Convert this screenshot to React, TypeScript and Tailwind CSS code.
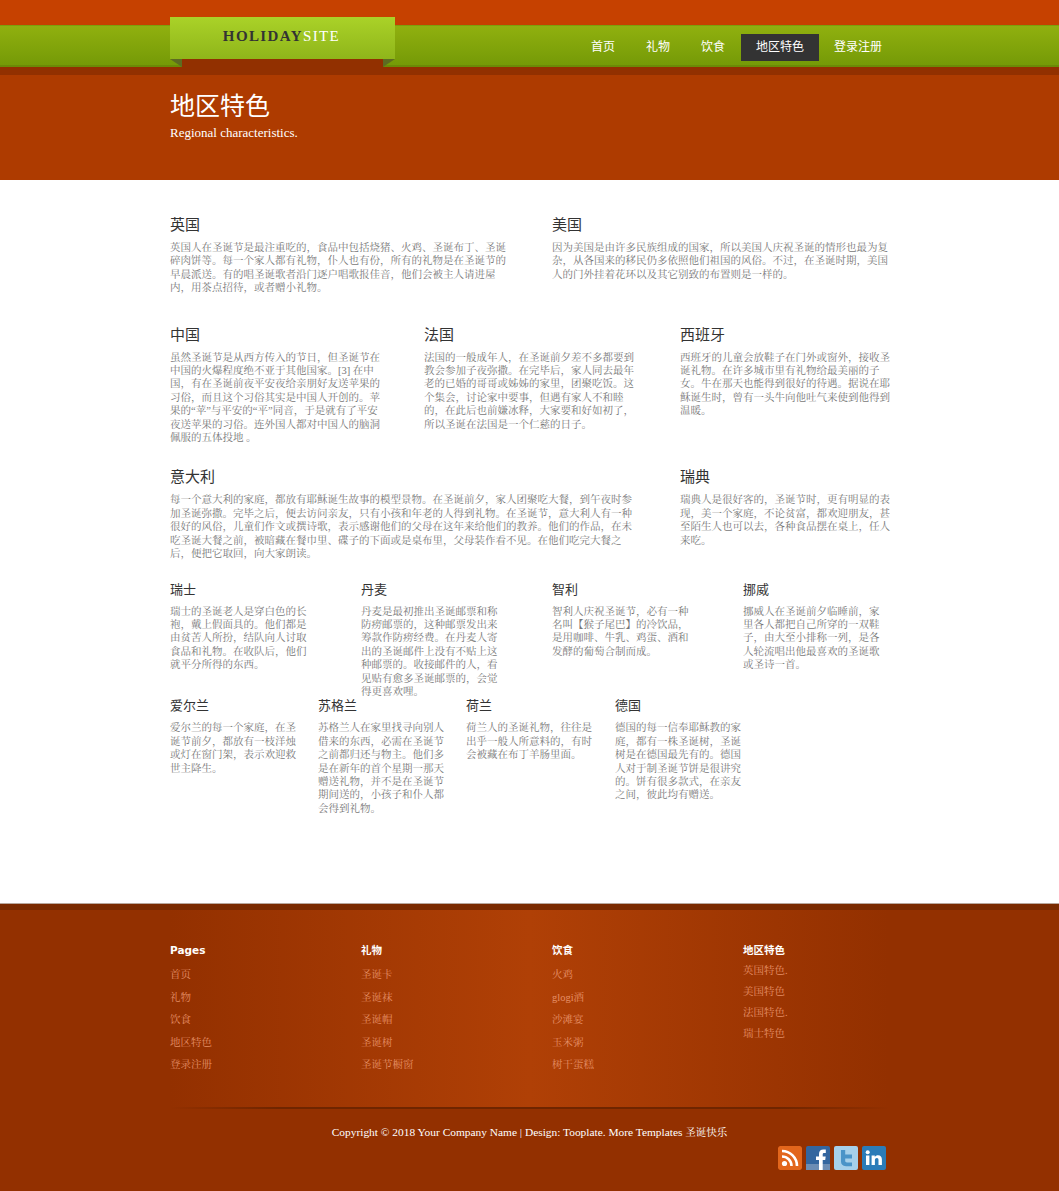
import React from "react";

const serif = "font-['Georgia','Liberation_Serif','Noto_Serif_CJK_SC','AR_PL_UMing_CN',serif]";
const sans = "font-['Liberation_Sans','Noto_Sans_CJK_SC',sans-serif]";

function Card({ title, text, small }: { title: string; text: string; small?: boolean }) {
  return (
    <div>
      <h3 className={`${sans} text-[#333] font-normal ${small ? "text-[13px] leading-[18px] mb-[6px]" : "text-[15px] leading-[20px] mb-[6px]"}`}>{title}</h3>
      <p className={`${serif} text-[10.5px] leading-[13.4px] text-[#777] whitespace-pre`}>{text}</p>
    </div>
  );
}

function FooterCol({ title, links, tight }: { title: string; links: string[]; tight?: boolean }) {
  return (
    <div>
      <h4 className="font-['DejaVu_Sans','Noto_Sans_CJK_SC',sans-serif] font-bold text-[10.5px] leading-[14px] text-white">{title}</h4>
      <ul className={tight ? "mt-[3px]" : "mt-[7px]"}>
        {links.map((l) => (
          <li key={l} className={`${serif} text-[10.5px] text-[#e58f66] ${tight ? "leading-[21px]" : "leading-[22.5px]"}`}>{l}</li>
        ))}
      </ul>
    </div>
  );
}

function Social() {
  return (
    <div className="flex justify-end gap-[4px] pr-[3px] mt-[5px]">
      <svg width="24" height="24" viewBox="0 0 24 24" className="rounded-[2px]">
        <rect width="24" height="24" rx="2" fill="#e2661c" />
        <circle cx="6.5" cy="17.5" r="2.6" fill="#fff" />
        <path d="M4 10.5a9.5 9.5 0 0 1 9.5 9.5" stroke="#fff" strokeWidth="2.6" fill="none" />
        <path d="M4 5a15 15 0 0 1 15 15" stroke="#fff" strokeWidth="2.6" fill="none" />
      </svg>
      <svg width="24" height="24" viewBox="0 0 24 24">
        <rect width="24" height="24" rx="2" fill="#33669f" />
        <rect y="18" width="24" height="6" fill="#6c8db4" />
        <path d="M13 24V14h-3v-3.6h3V8c0-3 1.8-4.4 4.4-4.4h2.4v3.4h-1.6c-1.2 0-1.5.6-1.5 1.5v1.9h3l-.5 3.6h-2.5v10z" fill="#fff" />
      </svg>
      <svg width="24" height="24" viewBox="0 0 24 24">
        <rect width="24" height="24" rx="2" fill="#a6d0ea" />
        <path d="M7 4h4.2v4.6H18v3.8h-6.8v2.4c0 1.2.6 1.6 1.8 1.6H18v3.8h-6c-3.4 0-5-1.8-5-4.6z" fill="#4a94c8" />
      </svg>
      <svg width="24" height="24" viewBox="0 0 24 24">
        <rect width="24" height="24" rx="2" fill="#2b7cb8" />
        <rect x="4" y="9.5" width="3.4" height="9.5" fill="#fff" />
        <circle cx="5.7" cy="6.3" r="2" fill="#fff" />
        <path d="M9.6 9.5h3.2v1.4c.7-1 1.8-1.7 3.2-1.7 2.6 0 3.9 1.7 3.9 4.4V19h-3.4v-5c0-1.3-.5-2.1-1.6-2.1s-2 .8-2 2.2V19H9.6z" fill="#fff" />
      </svg>
    </div>
  );
}

export default function App() {
  const nav = ["首页", "礼物", "饮食", "地区特色", "登录注册"];
  return (
    <div className="bg-white min-h-[1191px]">
      <header className="relative">
        <div className="h-[25px] bg-[#c64100]" />
        <div className="h-[42px] border-t border-[#7d9f0c] border-b-2 border-b-[#6b8a06] bg-[linear-gradient(#90b00f,#759a07)]">
          <nav className={`w-[719px] mx-auto flex justify-end gap-[1px] pt-[8px] translate-x-[8px] ${sans}`}>
            {nav.map((n) => (
              <a key={n} className={`h-[27px] px-[15px] text-[12px] leading-[27px] text-white ${n === "地区特色" ? "bg-[#333]" : ""} ${n === "登录注册" ? "-ml-[1px]" : ""}`}>{n}</a>
            ))}
          </nav>
        </div>
        <div className="h-[8px] bg-[#923000]" />
        <div className="h-[105px] bg-[#ae3b00]">
          <div className="w-[719px] mx-auto pt-[14px]">
            <h1 className={`${sans} text-[25px] leading-[34px] text-white font-normal`}>地区特色</h1>
            <p className="font-['Georgia','Liberation_Serif',serif] text-[13px] leading-[16px] mt-[2px] text-white">Regional characteristics.</p>
          </div>
        </div>
        <div className="absolute top-[17px] left-[170px] w-[225px] h-[50px]">
          <div className="h-[42px] bg-[linear-gradient(#aad228,#8fb51a)] flex items-center justify-center pr-[2px] pb-[4px] font-['Liberation_Serif',serif] text-[15px] tracking-[1.4px]">
            <span className="font-bold text-[#333]">HOLIDAY</span>
            <span className="text-white">SITE</span>
          </div>
          <svg width="225" height="8" viewBox="0 0 225 8" className="block">
            <path d="M0 0h12v8z" fill="#5d6b22" />
            <path d="M225 0h-12v8z" fill="#5d6b22" />
            <path d="M12 0h201v8H12z" fill="#923000" />
          </svg>
        </div>
      </header>

      <main className="w-[719px] mx-auto pt-[35px] h-[723px]">
        <div className="grid grid-cols-[382px_1fr]">
          <Card title="英国" text={"英国人在圣诞节是最注重吃的，食品中包括烧猪、火鸡、圣诞布丁、圣诞\n碎肉饼等。每一个家人都有礼物，仆人也有份，所有的礼物是在圣诞节的\n早晨派送。有的唱圣诞歌者沿门逐户唱歌报佳音，他们会被主人请进屋\n内，用茶点招待，或者赠小礼物。"} />
          <Card title="美国" text={"因为美国是由许多民族组成的国家，所以美国人庆祝圣诞的情形也最为复\n杂，从各国来的移民仍多依照他们祖国的风俗。不过，在圣诞时期，美国\n人的门外挂着花环以及其它别致的布置则是一样的。"} />
        </div>
        <div className="grid grid-cols-[254px_256px_1fr] mt-[30px]">
          <Card title="中国" text={"虽然圣诞节是从西方传入的节日，但圣诞节在\n中国的火爆程度绝不亚于其他国家。[3] 在中\n国，有在圣诞前夜平安夜给亲朋好友送苹果的\n习俗，而且这个习俗其实是中国人开创的。苹\n果的“苹”与平安的“平”同音，于是就有了平安\n夜送苹果的习俗。连外国人都对中国人的脑洞\n佩服的五体投地 。"} />
          <Card title="法国" text={"法国的一般成年人，在圣诞前夕差不多都要到\n教会参加子夜弥撒。在完毕后，家人同去最年\n老的已婚的哥哥或姊姊的家里，团聚吃饭。这\n个集会，讨论家中要事，但遇有家人不和睦\n的，在此后也前嫌冰释，大家要和好如初了，\n所以圣诞在法国是一个仁慈的日子。"} />
          <Card title="西班牙" text={"西班牙的儿童会放鞋子在门外或窗外，接收圣\n诞礼物。在许多城市里有礼物给最美丽的子\n女。牛在那天也能得到很好的待遇。据说在耶\n稣诞生时，曾有一头牛向他吐气来使到他得到\n温暖。"} />
        </div>
        <div className="grid grid-cols-[510px_1fr] mt-[23px]">
          <Card title="意大利" text={"每一个意大利的家庭，都放有耶稣诞生故事的模型景物。在圣诞前夕，家人团聚吃大餐，到午夜时参\n加圣诞弥撒。完毕之后，便去访问亲友，只有小孩和年老的人得到礼物。在圣诞节，意大利人有一种\n很好的风俗，儿童们作文或撰诗歌，表示感谢他们的父母在这年来给他们的教养。他们的作品，在未\n吃圣诞大餐之前，被暗藏在餐巾里、碟子的下面或是桌布里，父母装作看不见。在他们吃完大餐之\n后，便把它取回，向大家朗读。"} />
          <Card title="瑞典" text={"瑞典人是很好客的，圣诞节时，更有明显的表\n现，美一个家庭，不论贫富，都欢迎朋友，甚\n至陌生人也可以去，各种食品摆在桌上，任人\n来吃。"} />
        </div>
        <div className="grid grid-cols-[191px_191px_191px_1fr] mt-[20px]">
          <Card small title="瑞士" text={"瑞士的圣诞老人是穿白色的长\n袍，戴上假面具的。他们都是\n由贫苦人所扮，结队向人讨取\n食品和礼物。在收队后，他们\n就平分所得的东西。"} />
          <Card small title="丹麦" text={"丹麦是最初推出圣诞邮票和称\n防痨邮票的，这种邮票发出来\n筹款作防痨经费。在丹麦人寄\n出的圣诞邮件上没有不贴上这\n种邮票的。收接邮件的人，看\n见贴有愈多圣诞邮票的，会觉\n得更喜欢哩。"} />
          <Card small title="智利" text={"智利人庆祝圣诞节，必有一种\n名叫【猴子尾巴】的冷饮品，\n是用咖啡、牛乳、鸡蛋、酒和\n发酵的葡萄合制而成。"} />
          <Card small title="挪威" text={"挪威人在圣诞前夕临睡前，家\n里各人都把自己所穿的一双鞋\n子，由大至小排称一列，是各\n人轮流唱出他最喜欢的圣诞歌\n或圣诗一首。"} />
        </div>
        <div className="grid grid-cols-[148px_148px_149px_1fr] -mt-[1px]">
          <Card small title="爱尔兰" text={"爱尔兰的每一个家庭，在圣\n诞节前夕，都放有一枝洋烛\n或灯在窗门架，表示欢迎救\n世主降生。"} />
          <Card small title="苏格兰" text={"苏格兰人在家里找寻向别人\n借来的东西，必需在圣诞节\n之前都归还与物主。他们多\n是在新年的首个星期一那天\n赠送礼物，并不是在圣诞节\n期间送的，小孩子和仆人都\n会得到礼物。"} />
          <Card small title="荷兰" text={"荷兰人的圣诞礼物，往往是\n出乎一般人所意料的，有时\n会被藏在布丁羊肠里面。"} />
          <Card small title="德国" text={"德国的每一信奉耶稣教的家\n庭，都有一株圣诞树，圣诞\n树是在德国最先有的。德国\n人对于制圣诞节饼是很讲究\n的。饼有很多款式，在亲友\n之间，彼此均有赠送。"} />
        </div>
      </main>

      <footer className="bg-[#933000] h-[288px] border-t border-[#b9a79d]">
        <div className="h-[6px] bg-[#7a2a00]" />
        <div className="w-[719px] mx-auto">
          <div className="h-[197px] pt-[33px] grid grid-cols-[191px_191px_191px_1fr] bg-[linear-gradient(90deg,#933000,#b04006_50%,#933000)]">
            <FooterCol title="Pages" links={["首页", "礼物", "饮食", "地区特色", "登录注册"]} />
            <FooterCol title="礼物" links={["圣诞卡", "圣诞袜", "圣诞帽", "圣诞树", "圣诞节橱窗"]} />
            <FooterCol title="饮食" links={["火鸡", "glogi酒", "沙滩宴", "玉米粥", "树干蛋糕"]} />
            <FooterCol tight title="地区特色" links={["英国特色.", "美国特色", "法国特色.", "瑞士特色"]} />
          </div>
          <div className="h-[2px] bg-[linear-gradient(90deg,transparent,#6f2500_15%,#6f2500_85%,transparent)]" />
          <p className={`${serif} text-[11.4px] leading-[16px] text-white text-center mt-[15px]`}>Copyright © 2018 Your Company Name | Design: Tooplate. More Templates <span className="text-[10.5px]">圣诞快乐</span></p>
          <Social />
        </div>
      </footer>
    </div>
  );
}
